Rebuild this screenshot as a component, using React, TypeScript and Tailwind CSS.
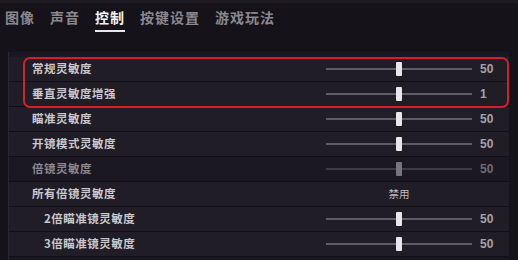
import React from "react";

const font = { fontFamily: '"Noto Sans CJK SC", "Noto Sans", sans-serif' };

type Row = { label: string; value?: string; indent?: boolean; dim?: boolean; disabled?: boolean };

const rows: Row[] = [
  { label: "常规灵敏度", value: "50" },
  { label: "垂直灵敏度增强", value: "1" },
  { label: "瞄准灵敏度", value: "50" },
  { label: "开镜模式灵敏度", value: "50" },
  { label: "倍镜灵敏度", value: "50", dim: true },
  { label: "所有倍镜灵敏度", disabled: true },
  { label: "2倍瞄准镜灵敏度", value: "50", indent: true },
  { label: "3倍瞄准镜灵敏度", value: "50", indent: true },
];

function Slider({ dim }: { dim?: boolean }) {
  return (
    <div className="relative w-[146px] h-[14px] flex items-center">
      <div className={`h-[2px] w-full ${dim ? "bg-[#3e3b44]" : "bg-[#5e5c64]"}`} />
      <div
        className={`absolute left-[70px] top-0 w-[6px] h-[14px] rounded-[1px] ${
          dim ? "bg-[#77757c]" : "bg-[#e8e8ea]"
        }`}
      />
    </div>
  );
}

export default function App() {
  const tabs = ["图像", "声音", "控制", "按键设置", "游戏玩法"];
  return (
    <div className="w-[518px] h-[260px] bg-[#15121a] overflow-hidden relative" style={font}>
      <div className="h-[3px] bg-[#1d1a22]" />
      <div className="flex items-start h-[49px] pl-[5px] gap-[15px] pt-[4px]">
        {tabs.map((t) => (
          <div key={t} className="flex flex-col items-start">
            <span
              className={`text-[14px] font-bold leading-[20px] tracking-[1px] ${
                t === "控制" ? "text-[#f2f2f2]" : "text-[#8a888e]"
              }`}
            >
              {t}
            </span>
            {t === "控制" && <div className="mt-[3px] h-[2px] w-[30px] bg-[#e8e8e8]" />}
          </div>
        ))}
      </div>
      <div className="ml-[8px] mr-[9px] h-[210px] bg-[#1a1720] border-l border-[#2a2730] pt-[5px] relative">
        {rows.map((r) => (
          <div
            key={r.label}
            className={`h-[25px] flex items-center border-b border-[#110f15] ${
              r.dim ? "bg-[#1b1822]" : "bg-[#201d26]"
            }`}
          >
            <div
              className={`w-[317px] text-[11.5px] font-bold tracking-[0.5px] ${
                r.indent ? "pl-[35px]" : "pl-[23px]"
              } ${r.dim ? "text-[#8a878e]" : "text-[#c9c7cc]"}`}
            >
              {r.label}
            </div>
            {r.disabled ? (
              <div className="w-[146px] text-center text-[10.5px] text-[#bdbbc0]">禁用</div>
            ) : (
              <Slider dim={r.dim} />
            )}
            {!r.disabled && (
              <div
                className={`ml-[8px] text-[12px] font-bold ${r.dim ? "text-[#6e6c72]" : "text-[#a5a3a9]"}`}
                style={{ fontFamily: '"Liberation Sans", sans-serif' }}
              >
                {r.value}
              </div>
            )}
          </div>
        ))}
        <div className="absolute left-[14px] right-[0px] top-[5px] h-[51px] border-2 border-[#d0202c] rounded-[7px] pointer-events-none" />
      </div>
    </div>
  );
}
